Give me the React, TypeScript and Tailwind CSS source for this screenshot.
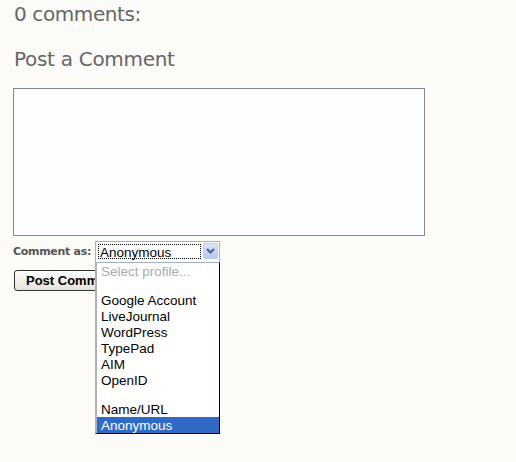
import React from 'react';

const profiles: { label: string; kind?: 'hint' | 'gap' | 'selected' }[] = [
  { label: 'Select profile...', kind: 'hint' },
  { label: '', kind: 'gap' },
  { label: 'Google Account' },
  { label: 'LiveJournal' },
  { label: 'WordPress' },
  { label: 'TypePad' },
  { label: 'AIM' },
  { label: 'OpenID' },
  { label: '', kind: 'gap' },
  { label: 'Name/URL' },
  { label: 'Anonymous', kind: 'selected' },
];

const ChevronDown = () => (
  <svg width="9" height="6" viewBox="0 0 9 6" fill="none">
    <path d="M1 1l3.5 3.5L8 1" stroke="#4d6185" strokeWidth="2" />
  </svg>
);

export default function App() {
  return (
    <div className="min-h-[462px] w-[516px] bg-[#fcfbf7] pl-[13px] font-['DejaVu_Sans',sans-serif]">
      <h4 className="ml-px pt-[2px] text-[20px] leading-[24px] tracking-[-0.4px] text-[#666] font-normal">
        0 comments:
      </h4>
      <h4 className="ml-px mt-[21px] text-[20px] leading-[24px] tracking-[-0.3px] text-[#666] font-normal">
        Post a Comment
      </h4>

      <textarea
        className="mt-[17px] block h-[148px] w-[412px] resize-none border border-[#888] bg-[#fdffff] outline-none"
        defaultValue=""
      />

      <div className="mt-[5px] flex items-start">
        <label className="mt-[4px] w-[82px] text-[11px] leading-[14px] font-bold tracking-[-0.3px] text-[#555]">
          Comment as:
        </label>

        <div className="relative z-10">
          <div className="flex h-[22px] w-[125px] border border-[#9fb2cc] bg-white font-['Liberation_Sans',Arial,sans-serif]">
            <div className="ml-[2px] mt-[2px] h-[15px] w-[103px] border border-dotted border-black pl-[1px] pt-px text-[13.5px] leading-[13px] text-black">
              Anonymous
            </div>
            <div className="ml-auto mr-px mt-px flex h-[16px] w-[15px] items-center justify-center rounded-[2px] border border-[#b9cdf3] bg-gradient-to-b from-[#dbe6fd] to-[#b4c8f5]">
              <ChevronDown />
            </div>
          </div>

          <ul className="absolute left-0 top-[21px] w-[125px] border-t border-t-[#9fb2cc] border-l-2 border-l-[#b0b0b0] border-r border-r-black border-b border-b-black bg-white font-['Liberation_Sans',Arial,sans-serif] text-[13.5px]">
            {profiles.map((p, i) =>
              p.kind === 'gap' ? (
                <li key={i} className="h-[13px]" />
              ) : (
                <li
                  key={i}
                  className={
                    p.kind === 'selected'
                      ? 'h-[16px] bg-[#316ac5] pl-[4px] pt-px leading-[15px] text-white'
                      : p.kind === 'hint'
                      ? 'h-[16px] pl-[4px] pt-px leading-[15px] text-[#aaa]'
                      : 'h-[16px] pl-[4px] pt-px leading-[15px] text-black'
                  }
                >
                  {p.label}
                </li>
              )
            )}
          </ul>
        </div>
      </div>

      <button className="ml-px mt-[7px] block h-[21px] rounded-[3px] border border-[#333] bg-gradient-to-b from-white to-[#e4e2da] px-[11px] font-['Liberation_Sans',Arial,sans-serif] text-[13px] font-bold leading-[16px] text-black">
        Post Comment
      </button>
    </div>
  );
}
